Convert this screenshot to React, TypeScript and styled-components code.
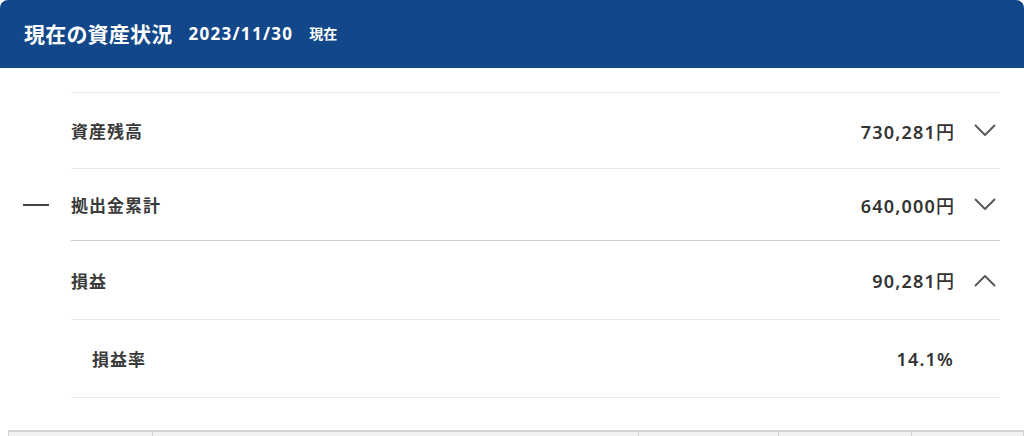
import React from 'react';
import styled, { createGlobalStyle } from 'styled-components';

const GlobalStyle = createGlobalStyle`
  html, body {
    margin: 0;
    padding: 0;
    background: #ffffff;
  }
  body {
    font-family: "Noto Sans", "Noto Sans CJK JP", sans-serif;
    color: #333333;
    overflow: hidden;
  }
`;

const Panel = styled.section`
  width: 1024px;
`;

const Header = styled.header`
  height: 68px;
  background: #12478a;
  border-radius: 8px 8px 0 0;
  display: flex;
  align-items: center;
  padding: 0 24px 2px;
  box-sizing: border-box;
  color: #ffffff;
  font-family: "Noto Sans CJK JP", sans-serif;
  font-weight: 700;
`;

const Title = styled.h2`
  margin: 0;
  font-size: 21px;
  font-weight: 700;
  letter-spacing: 0.2px;
`;

const DateLabel = styled.span`
  margin-left: 16px;
  font-family: "Noto Sans", "Noto Sans CJK JP", sans-serif;
  font-size: 17px;
  font-weight: 700;
  letter-spacing: 1.3px;
`;

const AsOf = styled.span`
  margin-left: 16px;
  font-size: 14px;
`;

const List = styled.ul`
  list-style: none;
  margin: 0;
  padding: 24px 24px 0 0;
`;

const Item = styled.li`
  display: flex;
  align-items: stretch;
`;

const Operator = styled.div`
  width: 71px;
  flex: none;
  display: flex;
  align-items: center;
  justify-content: center;
`;

const Minus = styled.span`
  display: block;
  width: 26px;
  height: 2px;
  background: #444444;
`;

const Line = styled.div<{ $height: number; $strong?: boolean; $first?: boolean; $sub?: boolean }>`
  flex: 1;
  height: ${(p) => p.$height}px;
  display: flex;
  align-items: center;
  padding-left: ${(p) => (p.$sub ? 21 : 0)}px;
  border-top: ${(p) => (p.$first ? '1px solid #e8e8e8' : 'none')};
  border-bottom: 1px solid ${(p) => (p.$strong ? '#cfcfcf' : '#e8e8e8')};
  box-sizing: border-box;
`;

const Label = styled.span`
  flex: 1;
  font-family: "Noto Sans CJK JP", sans-serif;
  font-size: 17px;
  font-weight: 700;
  letter-spacing: 1px;
  color: #3a3a3a;
`;

const Value = styled.span`
  font-size: 18px;
  font-weight: 600;
  letter-spacing: 1.2px;
  color: #333333;
`;

const Yen = styled.span`
  font-family: "Noto Sans CJK JP", sans-serif;
  font-weight: 500;
  letter-spacing: 0;
`;

const Toggle = styled.span`
  width: 24px;
  margin-left: 19px;
  margin-right: 3px;
  display: flex;
  align-items: center;
  justify-content: center;
  color: #555555;
`;

const Table = styled.div`
  margin: 32px 0 0 8px;
  display: grid;
  grid-template-columns: 144px 486px 140px 133px 1fr;
  border-top: 2px solid #d4d4d4;
  border-left: 1px solid #d4d4d4;
  background: #f2f2f2;
`;

const Cell = styled.div`
  height: 40px;
  border-right: 1px solid #d4d4d4;
`;

const Chevron = ({ up }: { up?: boolean }) => (
  <svg width="22" height="13" viewBox="0 0 22 13" fill="none">
    <path
      d={up ? 'M1.5 11.5 L11 2 L20.5 11.5' : 'M1.5 1.5 L11 11 L20.5 1.5'}
      stroke="currentColor"
      strokeWidth="1.8"
      strokeLinecap="round"
      strokeLinejoin="round"
    />
  </svg>
);

type Row = {
  label: string;
  value: string;
  yen?: boolean;
  height: number;
  op?: boolean;
  strong?: boolean;
  sub?: boolean;
  toggle?: 'up' | 'down';
};

const rows: Row[] = [
  { label: '資産残高', value: '730,281', yen: true, height: 77, toggle: 'down' },
  { label: '拠出金累計', value: '640,000', yen: true, height: 72, op: true, strong: true, toggle: 'down' },
  { label: '損益', value: '90,281', yen: true, height: 79, toggle: 'up' },
  { label: '損益率', value: '14.1%', height: 78, sub: true },
];

const App = () => (
  <Panel>
    <GlobalStyle />
    <Header>
      <Title>現在の資産状況</Title>
      <DateLabel>2023/11/30</DateLabel>
      <AsOf>現在</AsOf>
    </Header>
    <List>
      {rows.map((row, i) => (
        <Item key={row.label}>
          <Operator>{row.op && <Minus />}</Operator>
          <Line $height={row.height} $strong={row.strong} $first={i === 0} $sub={row.sub}>
            <Label>{row.label}</Label>
            <Value>
              {row.value}
              {row.yen && <Yen>円</Yen>}
            </Value>
            <Toggle>{row.toggle && <Chevron up={row.toggle === 'up'} />}</Toggle>
          </Line>
        </Item>
      ))}
    </List>
    <Table>
      <Cell />
      <Cell />
      <Cell />
      <Cell />
      <Cell />
    </Table>
  </Panel>
);

export default App;
